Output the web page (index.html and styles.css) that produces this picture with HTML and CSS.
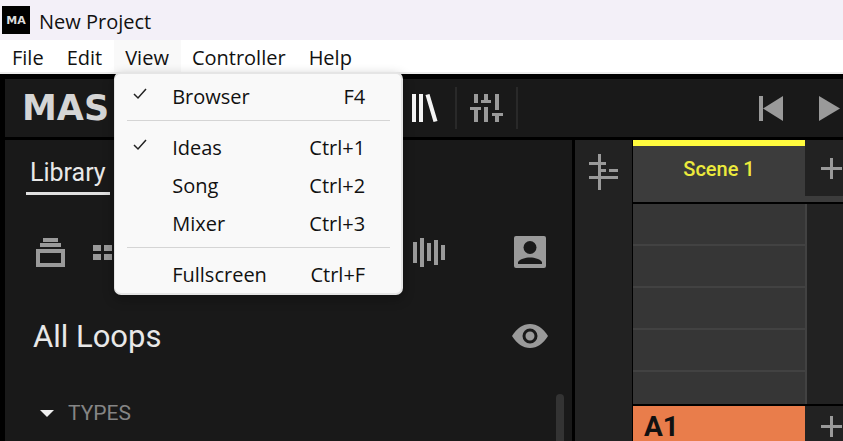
FILE: index.html
```html
<!DOCTYPE html>
<html lang="en">
<head>
    <meta charset="UTF-8">
    <meta name="viewport" content="width=device-width, initial-scale=1.0">
    <title>New Project</title>
    <link rel="stylesheet" href="styles.css">
</head>
<body>
    <header class="titlebar">
        <span class="app-icon">MA</span>
        <span>New Project</span>
    </header>

    <nav class="menubar">
        <button>File</button>
        <button>Edit</button>
        <div class="menu-holder">
            <button class="active">View</button>
            <div class="menu">
                <button class="menu-item">
                    <svg class="check" width="14" height="12" viewBox="0 0 14 12"><path d="M1 6l4 4L13 1"/></svg>
                    <span>Browser</span><span class="shortcut">F4</span>
                </button>
                <hr>
                <button class="menu-item">
                    <svg class="check" width="14" height="12" viewBox="0 0 14 12"><path d="M1 6l4 4L13 1"/></svg>
                    <span>Ideas</span><span class="shortcut">Ctrl+1</span>
                </button>
                <button class="menu-item"><span>Song</span><span class="shortcut">Ctrl+2</span></button>
                <button class="menu-item"><span>Mixer</span><span class="shortcut">Ctrl+3</span></button>
                <hr>
                <button class="menu-item"><span>Fullscreen</span><span class="shortcut">Ctrl+F</span></button>
            </div>
        </div>
        <button>Controller</button>
        <button>Help</button>
    </nav>

    <main class="app">
        <div class="toolbar">
            <div class="logo">MAS</div>
            <button class="tool library" aria-label="Browser">
                <svg width="27" height="28" viewBox="0 0 27 28" fill="#f4f4f4"><path d="M1 0h4v28H1zM8 0h4v28H8zM14.500 1l4-1 8 27-4 1z"/></svg>
            </button>
            <button class="tool mixer" aria-label="Mixer">
                <svg width="33" height="28" viewBox="0 0 33 28" fill="#9a9a9a"><path d="M4 0h4v9H4zM0 13h11v3H8v12H4V16H0zM14 0h4v6h3v3H11V6h3zM14 13h4v15h-4zM25 0h4v16h-4zM22 19h11v3h-4v6h-4v-6h-3z"/></svg>
            </button>
            <div class="transport">
                <button aria-label="Restart">
                    <svg width="24" height="25" viewBox="0 0 24 25" fill="#9a9a9a"><path d="M0 0h4v25H0zM24 0v25L4 12.500z"/></svg>
                </button>
                <button aria-label="Play">
                    <svg width="21" height="25" viewBox="0 0 21 25" fill="#9a9a9a"><path d="M0 0v25l21-12.500z"/></svg>
                </button>
            </div>
        </div>

        <div class="workspace">
            <section class="browser">
                <div class="tabs"><button class="tab">Library</button></div>
                <div class="filters">
                    <button aria-label="Projects">
                        <svg width="29" height="29" viewBox="0 0 29 29" fill="#9a9a9a"><path d="M7 0h15v4H7zM4 5h21v4H4z"/><path fill-rule="evenodd" d="M0 11h29v18H0zM4 15v10h21V15z"/></svg>
                    </button>
                    <button aria-label="Groups">
                        <svg width="30" height="15" viewBox="0 0 30 15" fill="#9a9a9a"><path d="M0 0h8v6H0zM11 0h8v6h-8zM22 0h8v6h-8zM0 9h8v6H0zM11 9h8v6h-8zM22 9h8v6h-8z"/></svg>
                    </button>
                    <button class="loops" aria-label="Loops">
                        <svg width="33" height="29" viewBox="0 0 33 29" fill="#9a9a9a"><path d="M1 4h4v21H1zM8 0h4v29H8zM15 5h4v18h-4zM22 2h4v25h-4zM29 7h4v15h-4z"/></svg>
                    </button>
                    <button aria-label="User content">
                        <svg width="32" height="32" viewBox="0 0 32 32"><rect width="32" height="32" rx="2" fill="#9a9a9a"/><circle cx="16" cy="11.500" r="6.500" fill="#191919"/><path d="M4 28v-2c4-6 20-6 24 0v2z" fill="#191919"/></svg>
                    </button>
                </div>
                <div class="heading">
                    <h1>All Loops</h1>
                    <button aria-label="Show">
                        <svg width="36" height="24" viewBox="0 0 36 24"><path d="M0 12C5 4 11 0 18 0s13 4 18 12c-5 8-11 12-18 12S5 20 0 12z" fill="#9a9a9a"/><circle cx="18" cy="12" r="6" fill="#9a9a9a" stroke="#191919" stroke-width="3"/></svg>
                    </button>
                </div>
                <div class="types">
                    <button class="types-toggle">
                        <svg width="14" height="7" viewBox="0 0 14 7" fill="#f0f0f0"><path d="M0 0h14L7 7z"/></svg>
                        TYPES
                    </button>
                    <div class="scrollbar"></div>
                </div>
            </section>

            <aside class="strip">
                <svg width="30" height="36" viewBox="0 0 30 36" fill="#9a9a9a"><path d="M9 0h3v36H9zM0 8h17v3H0zM10 15h7v3h-7zM20 15h9v3h-9zM0 22h29v3H0z"/></svg>
            </aside>

            <section class="scenes">
                <div class="scene-row">
                    <div class="scene">Scene 1</div>
                    <button class="add" aria-label="Add scene">
                        <svg width="21" height="21" viewBox="0 0 21 21" fill="#9a9a9a"><path d="M9 0h3v9h9v3h-9v9H9v-9H0V9h9z"/></svg>
                    </button>
                </div>
                <div class="slots">
                    <div class="slot"></div>
                    <div class="slot"></div>
                    <div class="slot"></div>
                    <div class="slot"></div>
                    <div class="slot"></div>
                </div>
                <div class="group-row">
                    <div class="group">A1</div>
                    <button class="add" aria-label="Add group">
                        <svg width="21" height="21" viewBox="0 0 21 21" fill="#9a9a9a"><path d="M9 0h3v9h9v3h-9v9H9v-9H0V9h9z"/></svg>
                    </button>
                </div>
            </section>
        </div>
    </main>
</body>
</html>
```
FILE: styles.css
```css
* {
    box-sizing: border-box;
}

body {
    margin: 0;
    height: 100vh;
    display: flex;
    flex-direction: column;
    overflow: hidden;
    background: #000;
    color: #111;
    font-family: 'Open Sans', 'Noto Sans', sans-serif;
    font-size: 20px;
}

button {
    padding: 0;
    border: none;
    background: none;
    color: inherit;
    font: inherit;
    cursor: pointer;
}

svg {
    display: block;
}

/* Window chrome */
.titlebar {
    height: 40px;
    flex: none;
    display: flex;
    align-items: center;
    gap: 9px;
    padding: 2px 2px 0;
    background: #f3f0f8;
}

.app-icon {
    width: 28px;
    height: 28px;
    margin-bottom: 2px;
    background: #000;
    color: #ddd;
    font: bold 11px/30px 'DejaVu Sans', sans-serif;
    text-align: center;
}

.menubar {
    height: 34px;
    flex: none;
    display: flex;
    padding-left: 1px;
    background: #fff;
    border-bottom: 2px solid #ededed;
}

.menubar > button,
.menu-holder > button {
    height: 32px;
    padding: 3px 12px 0 11px;
    line-height: 29px;
}

.menubar .active {
    background: #f9f9f9;
}

.menu-holder {
    position: relative;
}

.menu {
    position: absolute;
    z-index: 10;
    top: 32px;
    left: 0;
    width: 289px;
    padding: 3px 0 0;
    background: #f9f9f9;
    border: 2px solid #e5e5e5;
    border-left-width: 1px;
    border-radius: 7px;
    box-shadow: 0 4px 12px rgba(0, 0, 0, 0.3);
}

.menu-item {
    position: relative;
    display: flex;
    justify-content: space-between;
    align-items: center;
    width: 100%;
    height: 38px;
    padding: 0 36px 0 57px;
}

.check {
    position: absolute;
    left: 18px;
    top: 11px;
    fill: none;
    stroke: #222;
    stroke-width: 1.5;
}

.menu hr {
    height: 1px;
    margin: 5px 11px 7px 12px;
    border: none;
    background: #d5d5d5;
}

/* App */
.app {
    flex: 1;
    min-height: 0;
    display: flex;
    flex-direction: column;
    gap: 3px;
    padding: 5px 0 0 5px;
    font-family: Roboto, sans-serif;
}

.toolbar {
    height: 58px;
    flex: none;
    display: flex;
    align-items: center;
    background: #191919;
}

.logo {
    width: 386px;
    flex: none;
    padding-left: 17px;
    color: #d5d5d5;
    font: bold 35px 'DejaVu Sans', sans-serif;
}

.tool {
    height: 42px;
    border-right: 2px solid #292929;
}

.library {
    width: 66px;
    padding-left: 20px;
}

.mixer {
    width: 61px;
    padding-left: 13px;
}

.transport {
    display: flex;
    gap: 36px;
    margin-left: auto;
    padding-right: 3px;
}

.workspace {
    flex: 1;
    min-height: 0;
    display: flex;
}

.browser {
    flex: 1;
    background: #191919;
    color: #e8e8e8;
}

.tabs {
    padding: 12px 21px 0;
}

.tab {
    height: 43px;
    padding: 0 4px;
    border-bottom: 3px solid #e0e0e0;
    font-size: 25px;
}

.filters {
    display: flex;
    align-items: center;
    gap: 28px;
    padding: 41px 26px 0 31px;
}

.loops {
    margin-left: auto;
    margin-right: 41px;
}

.heading {
    display: flex;
    justify-content: space-between;
    align-items: center;
    height: 40px;
    margin-top: 48px;
    padding: 0 24px 0 28px;
}

.heading h1 {
    margin: 0;
    font-size: 31px;
    font-weight: 400;
}

.types {
    display: flex;
    justify-content: space-between;
    margin-top: 38px;
    padding: 0 8px 0 35px;
    color: #858585;
}

.types-toggle {
    display: flex;
    align-items: center;
    gap: 14px;
    height: 38px;
    font-size: 21px;
}

.scrollbar {
    width: 8px;
    height: 60px;
    border-radius: 4px 4px 0 0;
    background: #333;
}

.strip {
    width: 61px;
    padding: 14px 0 0 14px;
    background: #222;
    border-left: 3px solid #000;
    border-right: 1px solid #000;
}

.scenes {
    width: 210px;
    display: flex;
    flex-direction: column;
    background: #222;
}

.scene-row {
    display: flex;
    height: 62px;
    flex: none;
    background: #3c3c3c;
}

.scene {
    flex: 1;
    border-top: 6px solid #fffb3e;
    color: #ecea3c;
    font-size: 20px;
    font-weight: 500;
    line-height: 46px;
    text-align: center;
}

.add {
    width: 38px;
    display: flex;
    align-items: center;
    justify-content: flex-end;
    padding-right: 1px;
    background: #222;
}

.scene-row .add {
    height: 56px;
}

.slots {
    flex: 1;
    min-height: 0;
    overflow: hidden;
    border: solid #000;
    border-width: 2px 0;
}

.slot {
    height: 42px;
    margin-right: 36px;
    background: #363636;
    border-right: 2px solid #424242;
    border-bottom: 2px solid #424242;
}

.group-row {
    display: flex;
    height: 35px;
    flex: none;
}

.group {
    flex: 1;
    padding: 6px 11px 0;
    background: #e97d4b;
    color: #111;
    font-size: 28px;
    font-weight: 700;
    line-height: 29px;
}

.group-row .add {
    height: 40px;
}
```
